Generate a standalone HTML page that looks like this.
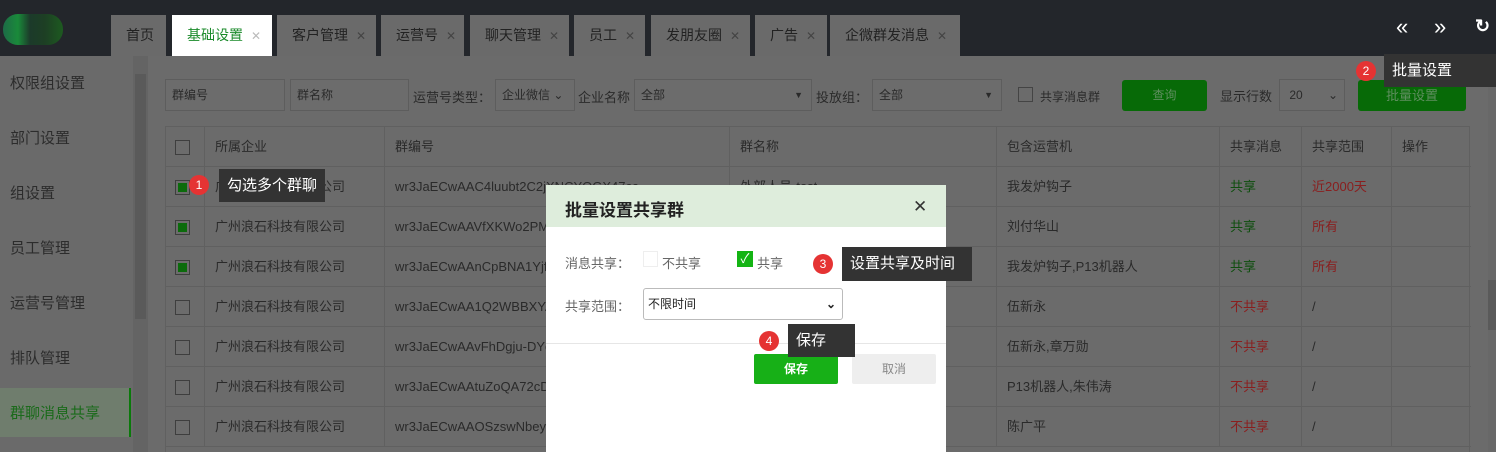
<!DOCTYPE html>
<html><head><meta charset="utf-8"><style>
*{box-sizing:border-box;margin:0;padding:0}
body{width:1496px;height:452px;overflow:hidden;background:#6b6b6b;font-family:"Liberation Sans","Noto Sans CJK SC",sans-serif;font-size:13px;color:#2a2a2a;position:relative}
.abs{position:absolute}
.top{left:0;top:0;width:1496px;height:56px;background:#23262b}
.tab{top:15px;height:41px;background:#6a6a6a;color:#222;font-size:14px;line-height:41px;padding-left:15px;white-space:nowrap;overflow:hidden}
.tab i{font-style:normal;color:#444;margin-left:8px;font-size:12px}
.side{left:0;top:56px;width:133px;height:396px;background:#6a6a6a}
.si{left:10px;font-size:15px;color:#2c2c2c}
.inp{height:32px;border:1px solid #5d5d5d;background:#6c6c6c;font-size:12px;line-height:30px;padding-left:6px;color:#2a2a2a}
.tbl{left:165px;top:126px;width:1305px}
.row{position:absolute;left:0;width:1305px;height:40px;border-bottom:1px solid #606060}
.c{position:absolute;top:0;height:40px;line-height:40px;border-left:1px solid #606060;padding-left:10px;white-space:nowrap;overflow:hidden}
.cb{position:absolute;left:9px;top:13px;width:15px;height:15px;border:1px solid #3e3e3e;background:#6c6c6c}
.cb.on::after{content:"";position:absolute;left:2px;top:2px;width:9px;height:9px;background:#0b6b0b}
.btn{position:absolute;left:15px;top:9px;width:48px;height:23px;background:#076a07;border-radius:3px;color:#5f8f5f;font-size:12px;line-height:23px;text-align:center}
.tip{background:#333;color:#fff;font-size:15px;padding:0 8px}
.dot{width:20px;height:20px;border-radius:50%;background:#e53333;color:#fff;font-size:12px;text-align:center;line-height:20px}
</style></head><body>
<div class="abs top"></div>
<div class="abs" style="left:3px;top:14px;width:60px;height:31px;border-radius:15px;background:linear-gradient(90deg,#1d6b47 0,#1a8a3a 25%,#1c3a2a 45%,#1d3f24 70%,#1d5a20 100%)"></div>
<div class="abs tab" style="left:111px;width:55px">首页</div>
<div class="abs tab" style="left:172px;width:100px;background:#fff;color:#1a8a2a">基础设置<i style="color:#bbb">✕</i></div>
<div class="abs tab" style="left:277px;width:99px">客户管理<i>✕</i></div>
<div class="abs tab" style="left:381px;width:83px">运营号<i>✕</i></div>
<div class="abs tab" style="left:470px;width:99px">聊天管理<i>✕</i></div>
<div class="abs tab" style="left:574px;width:71px">员工<i>✕</i></div>
<div class="abs tab" style="left:651px;width:99px">发朋友圈<i>✕</i></div>
<div class="abs tab" style="left:755px;width:72px;padding-left:15px">广告<i>✕</i></div>
<div class="abs tab" style="left:830px;width:130px;padding-left:15px">企微群发消息<i>✕</i></div>
<div class="abs" style="left:1396px;top:14px;color:#fff;font-size:22px">«</div>
<div class="abs" style="left:1434px;top:14px;color:#fff;font-size:22px">»</div>
<div class="abs" style="left:1475px;top:16px;color:#fff;font-size:18px;font-weight:bold">↻</div>

<div class="abs side"></div>
<div class="abs si" style="top:72px">权限组设置</div>
<div class="abs si" style="top:127px">部门设置</div>
<div class="abs si" style="top:182px">组设置</div>
<div class="abs si" style="top:237px">员工管理</div>
<div class="abs si" style="top:292px">运营号管理</div>
<div class="abs si" style="top:347px">排队管理</div>
<div class="abs" style="left:0;top:388px;width:131px;height:49px;background:#6f7d6d;border-right:2px solid #0a7a0a"></div>
<div class="abs si" style="top:402px;color:#1a6a1a">群聊消息共享</div>
<div class="abs" style="left:133px;top:56px;width:15px;height:396px;background:#646464"></div>
<div class="abs" style="left:135px;top:74px;width:11px;height:245px;background:#5a5a5a"></div>
<div class="abs" style="left:1488px;top:56px;width:8px;height:396px;background:#686868"></div>
<div class="abs" style="left:1488px;top:280px;width:8px;height:50px;background:#5a5a5a"></div>

<div class="abs inp" style="left:165px;top:79px;width:120px">群编号</div>
<div class="abs inp" style="left:290px;top:79px;width:119px">群名称</div>
<div class="abs" style="left:413px;top:87px">运营号类型：</div>
<div class="abs inp" style="left:495px;top:79px;width:80px">企业微信 ⌄</div>
<div class="abs" style="left:578px;top:87px">企业名称</div>
<div class="abs inp" style="left:634px;top:79px;width:178px">全部<span style="position:absolute;right:8px;font-size:9px">▼</span></div>
<div class="abs" style="left:816px;top:87px">投放组：</div>
<div class="abs inp" style="left:872px;top:79px;width:130px">全部<span style="position:absolute;right:8px;font-size:9px">▼</span></div>
<div class="abs" style="left:1018px;top:87px;width:15px;height:15px;border:1px solid #444"></div>
<div class="abs" style="left:1040px;top:88px;font-size:12px">共享消息群</div>
<div class="abs" style="left:1122px;top:80px;width:85px;height:31px;background:#076a07;border-radius:3px;color:#5f8f5f;text-align:center;line-height:31px;font-size:12px">查询</div>
<div class="abs" style="left:1220px;top:86px">显示行数</div>
<div class="abs inp" style="left:1279px;top:79px;width:66px">&nbsp;20<span style="position:absolute;right:6px">⌄</span></div>
<div class="abs" style="left:1358px;top:80px;width:108px;height:31px;background:#076a07;border-radius:3px;color:#5f8f5f;text-align:center;line-height:31px;font-size:13px">批量设置</div>

<div class="abs tbl" style="height:326px;border:1px solid #606060;border-bottom:none">
<div class="row" style="top:0"><div class="cb" style="left:9px"></div><div class="c" style="left:38px">所属企业</div><div class="c" style="left:218px">群编号</div><div class="c" style="left:563px">群名称</div><div class="c" style="left:830px">包含运营机</div><div class="c" style="left:1053px">共享消息</div><div class="c" style="left:1135px">共享范围</div><div class="c" style="left:1225px">操作</div></div>
<div class="row" style="top:40px"><div class="cb on"></div><div class="c" style="left:38px">广州浪石科技有限公司</div><div class="c" style="left:218px">wr3JaECwAAC4luubt2C2jXNCYOGX47cc</div><div class="c" style="left:563px">外部人员-test</div><div class="c" style="left:830px">我发炉钩子</div><div class="c" style="left:1053px;color:#0e4e0e">共享</div><div class="c" style="left:1135px;color:#8a1e1e">近2000天</div><div class="c" style="left:1225px"><div class="btn">设置</div></div></div>
<div class="row" style="top:80px"><div class="cb on"></div><div class="c" style="left:38px">广州浪石科技有限公司</div><div class="c" style="left:218px">wr3JaECwAAVfXKWo2PM</div><div class="c" style="left:563px"></div><div class="c" style="left:830px">刘付华山</div><div class="c" style="left:1053px;color:#0e4e0e">共享</div><div class="c" style="left:1135px;color:#8a1e1e">所有</div><div class="c" style="left:1225px"><div class="btn">设置</div></div></div>
<div class="row" style="top:120px"><div class="cb on"></div><div class="c" style="left:38px">广州浪石科技有限公司</div><div class="c" style="left:218px">wr3JaECwAAnCpBNA1Yjf</div><div class="c" style="left:563px"></div><div class="c" style="left:830px">我发炉钩子,P13机器人</div><div class="c" style="left:1053px;color:#0e4e0e">共享</div><div class="c" style="left:1135px;color:#8a1e1e">所有</div><div class="c" style="left:1225px"><div class="btn">设置</div></div></div>
<div class="row" style="top:160px"><div class="cb"></div><div class="c" style="left:38px">广州浪石科技有限公司</div><div class="c" style="left:218px">wr3JaECwAA1Q2WBBXYA</div><div class="c" style="left:563px"></div><div class="c" style="left:830px">伍新永</div><div class="c" style="left:1053px;color:#8a1e1e">不共享</div><div class="c" style="left:1135px">/</div><div class="c" style="left:1225px"><div class="btn">设置</div></div></div>
<div class="row" style="top:200px"><div class="cb"></div><div class="c" style="left:38px">广州浪石科技有限公司</div><div class="c" style="left:218px">wr3JaECwAAvFhDgju-DYc</div><div class="c" style="left:563px"></div><div class="c" style="left:830px">伍新永,章万勋</div><div class="c" style="left:1053px;color:#8a1e1e">不共享</div><div class="c" style="left:1135px">/</div><div class="c" style="left:1225px"><div class="btn">设置</div></div></div>
<div class="row" style="top:240px"><div class="cb"></div><div class="c" style="left:38px">广州浪石科技有限公司</div><div class="c" style="left:218px">wr3JaECwAAtuZoQA72cD</div><div class="c" style="left:563px"></div><div class="c" style="left:830px">P13机器人,朱伟涛</div><div class="c" style="left:1053px;color:#8a1e1e">不共享</div><div class="c" style="left:1135px">/</div><div class="c" style="left:1225px"><div class="btn">设置</div></div></div>
<div class="row" style="top:280px"><div class="cb"></div><div class="c" style="left:38px">广州浪石科技有限公司</div><div class="c" style="left:218px">wr3JaECwAAOSzswNbeys</div><div class="c" style="left:563px"></div><div class="c" style="left:830px">陈广平</div><div class="c" style="left:1053px;color:#8a1e1e">不共享</div><div class="c" style="left:1135px">/</div><div class="c" style="left:1225px"><div class="btn">设置</div></div></div>
</div>

<!-- modal -->
<div class="abs" style="left:546px;top:185px;width:400px;height:267px;background:#fff"></div>
<div class="abs" style="left:546px;top:185px;width:400px;height:42px;background:#deeddc"></div>
<div class="abs" style="left:565px;top:196px;font-size:17px;font-weight:bold;color:#222">批量设置共享群</div>
<div class="abs" style="left:913px;top:197px;font-size:17px;color:#333;font-weight:300">✕</div>
<div class="abs" style="left:565px;top:253px;color:#666;font-size:13px">消息共享：</div>
<div class="abs" style="left:643px;top:251px;width:15px;height:16px;border:1px solid #eee"></div>
<div class="abs" style="left:662px;top:253px;color:#666">不共享</div>
<div class="abs" style="left:737px;top:251px;width:16px;height:16px;background:#14b414;color:#fff;font-size:13px;line-height:16px;text-align:center">✓</div>
<div class="abs" style="left:757px;top:253px;color:#666">共享</div>
<div class="abs" style="left:565px;top:296px;color:#666">共享范围：</div>
<div class="abs" style="left:643px;top:288px;width:200px;height:32px;border:1px solid #bbb;border-radius:3px;line-height:30px;padding-left:4px;font-size:12px;color:#222">不限时间<span style="position:absolute;right:6px;font-weight:bold">⌄</span></div>
<div class="abs" style="left:546px;top:343px;width:400px;height:1px;background:#e6e6e6"></div>
<div class="abs" style="left:754px;top:354px;width:84px;height:30px;background:#17b017;border-radius:2px;color:#fff;font-weight:bold;text-align:center;line-height:30px;font-size:12px">保存</div>
<div class="abs" style="left:852px;top:354px;width:84px;height:30px;background:#eee;border-radius:2px;color:#888;text-align:center;line-height:30px;font-size:12px">取消</div>

<!-- tips -->
<div class="abs dot" style="left:189px;top:175px">1</div>
<div class="abs tip" style="left:219px;top:169px;height:33px;line-height:33px">勾选多个群聊</div>
<div class="abs dot" style="left:1356px;top:61px">2</div>
<div class="abs tip" style="left:1384px;top:54px;height:33px;line-height:33px;width:112px">批量设置</div>
<div class="abs dot" style="left:813px;top:254px">3</div>
<div class="abs tip" style="left:842px;top:247px;height:34px;line-height:34px;width:130px">设置共享及时间</div>
<div class="abs dot" style="left:759px;top:331px">4</div>
<div class="abs tip" style="left:788px;top:324px;height:33px;line-height:33px;width:67px">保存</div>
</body></html>
